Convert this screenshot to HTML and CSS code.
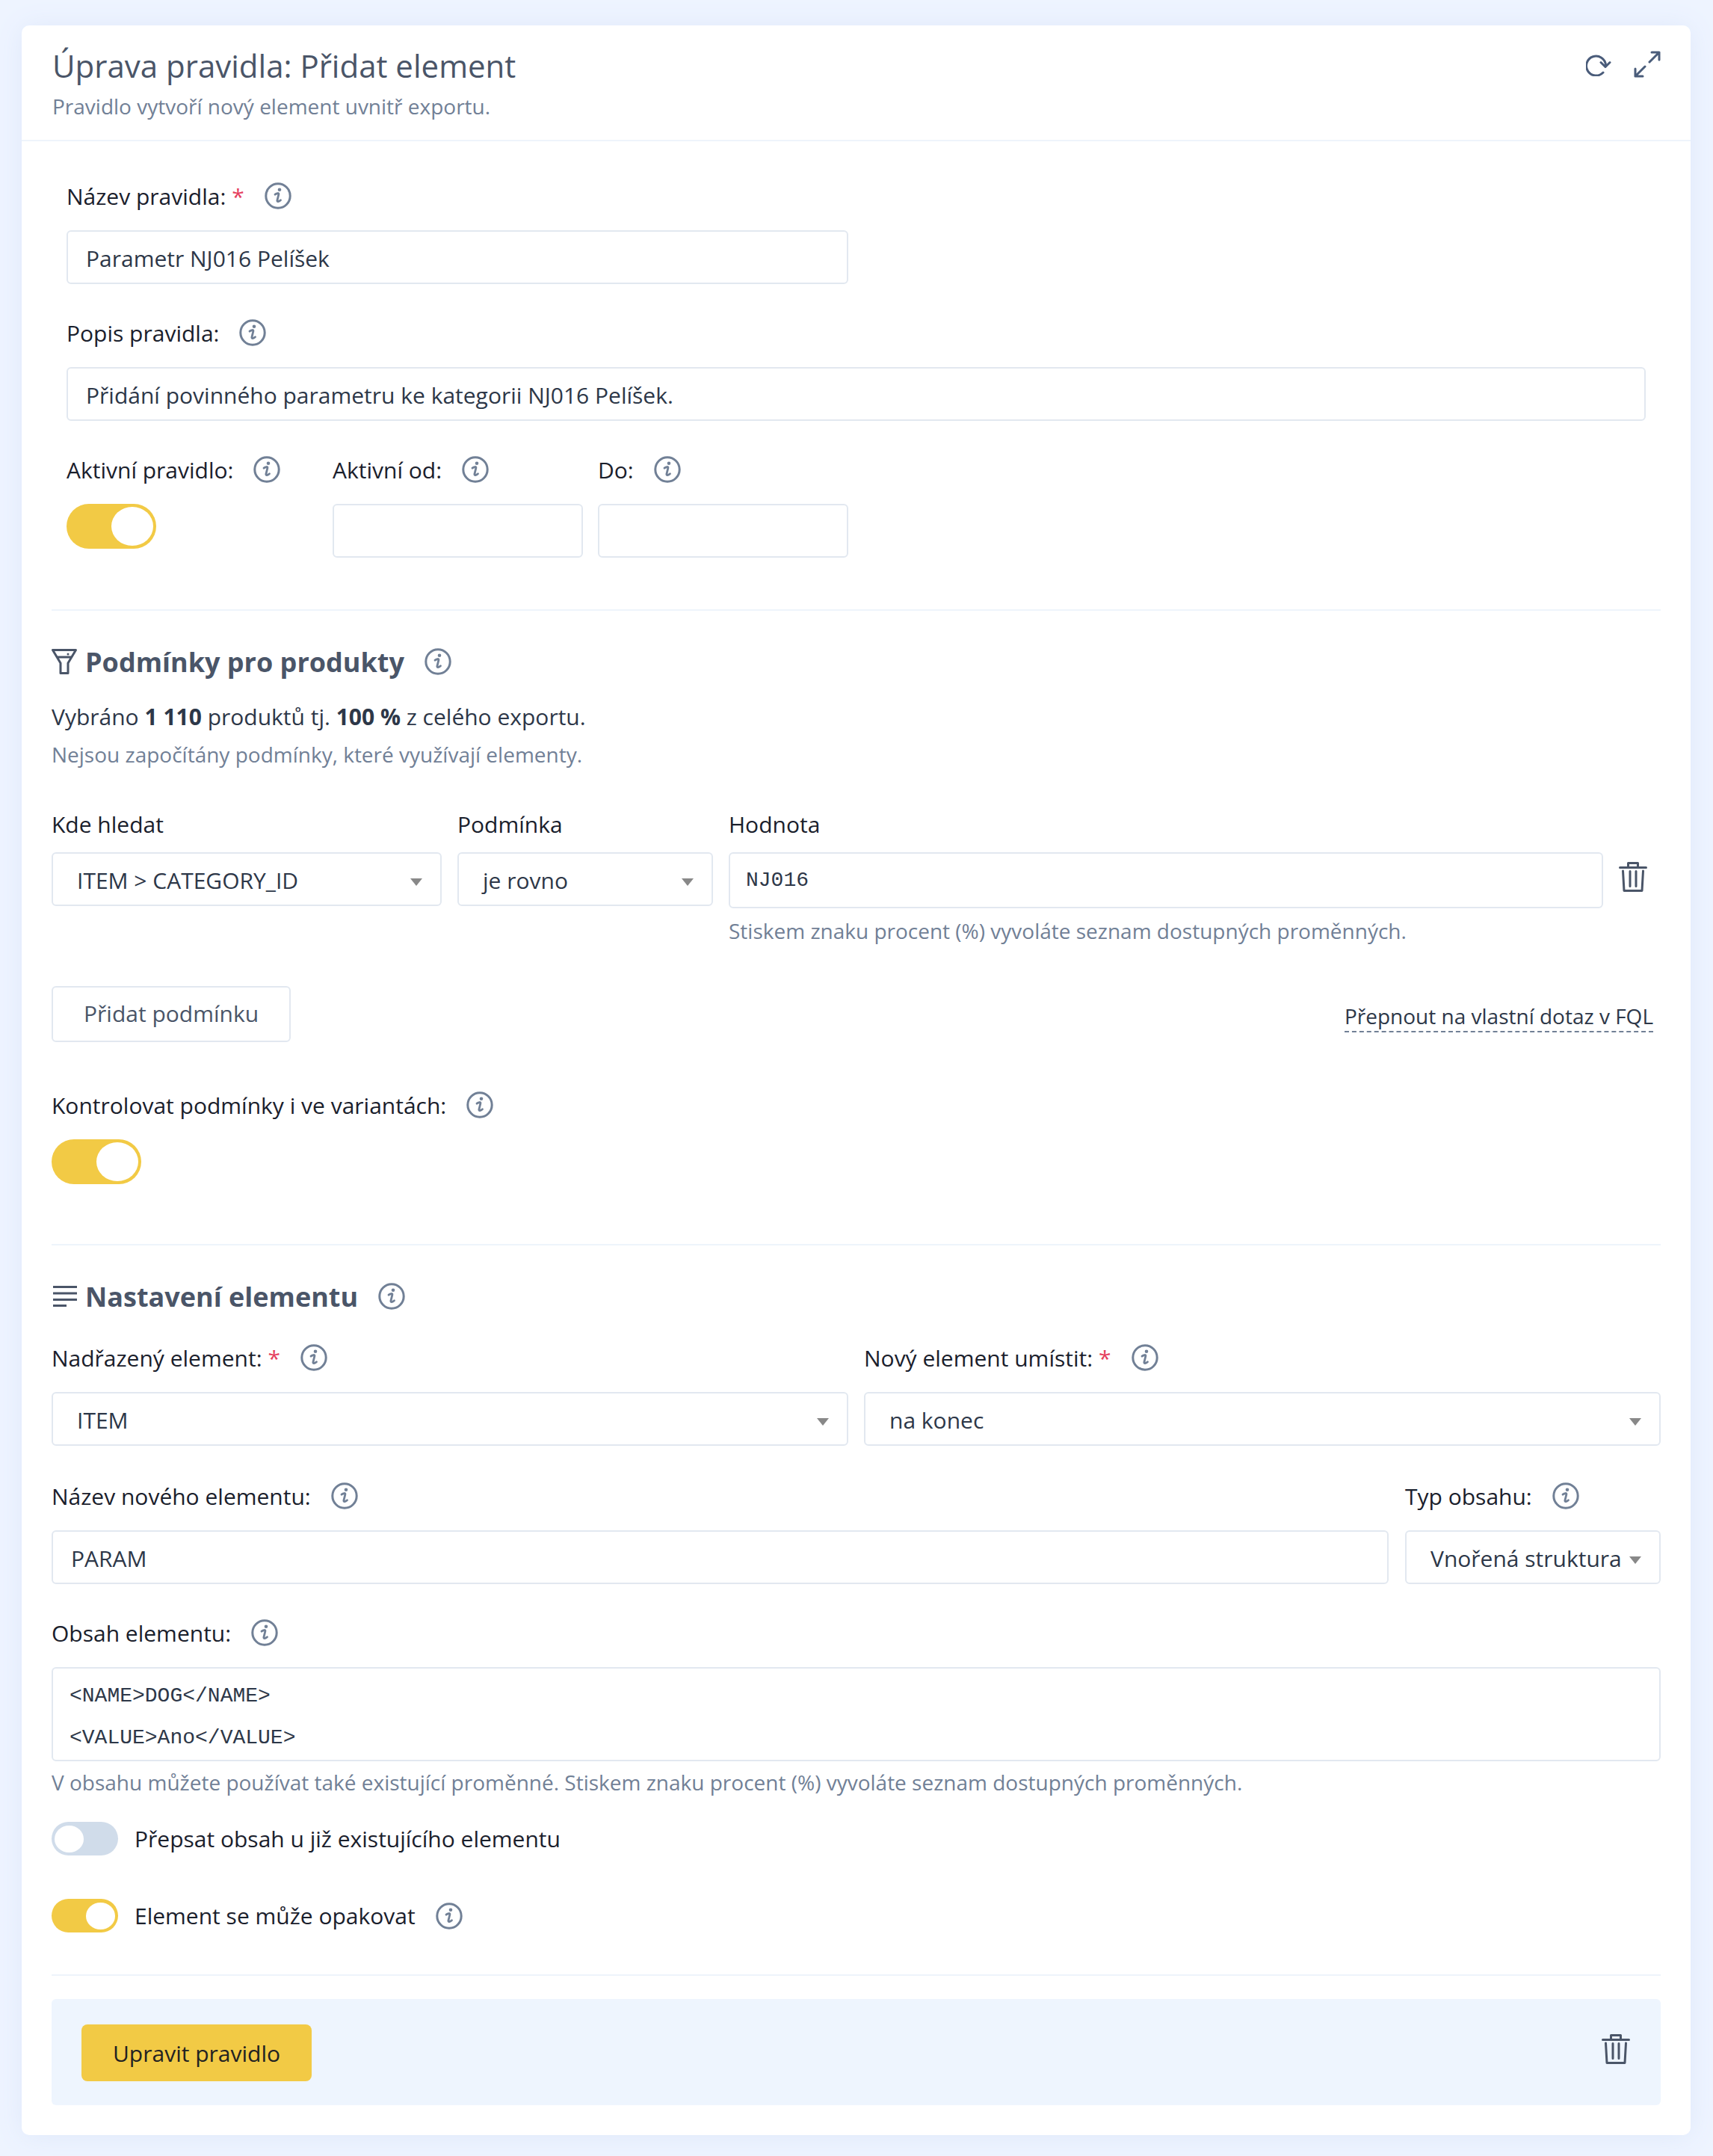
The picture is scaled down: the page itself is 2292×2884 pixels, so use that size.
FILE: index.html
```html
<!DOCTYPE html>
<html>
<head>
	<title>Úprava pravidla</title>
	<meta charset="utf-8">
	<link rel="stylesheet" href="styles.css">
</head>
<body>
	<svg class="defs" width="0" height="0">
		<symbol id="info" viewBox="0 0 36 36">
			<circle cx="18" cy="18" r="16.200" fill="none" stroke="currentColor" stroke-width="3"/>
			<path d="M14 16.200c2.400-2 5.400-2.400 4.900-.2l-2 8.200c-.5 2 2.300 1.600 4.600-.5" fill="none" stroke="currentColor" stroke-width="2.800" stroke-linecap="round"/>
			<circle cx="20" cy="9.800" r="2.300" fill="currentColor"/>
		</symbol>
		<symbol id="trash" viewBox="0 0 38 40">
			<path d="M1.500 7.500h35M12.500 7V1.500h13V7M5.500 12l1.500 26.500h24l1.500-26.500M15 12.500v20M23 12.500v20" fill="none" stroke="currentColor" stroke-width="3" stroke-linecap="round" stroke-linejoin="round"/>
		</symbol>
	</svg>

	<div class="card">
		<div class="card-head">
			<div>
				<h1 class="title">Úprava pravidla: Přidat element</h1>
				<p class="subtitle">Pravidlo vytvoří nový element uvnitř exportu.</p>
			</div>
			<div class="head-icons">
				<svg class="icon-refresh" viewBox="0 0 34 30"><path d="M23 25A13 13 0 1 1 26.500 15M20 11.500l6 6 6-6" fill="none" stroke="currentColor" stroke-width="3" stroke-linecap="round" stroke-linejoin="round"/></svg>
				<svg class="icon-expand" viewBox="0 0 36 36"><path d="M21 15L34 2M24 2h10v10M15 21L2 34M2 24v10h10" fill="none" stroke="currentColor" stroke-width="3" stroke-linecap="round" stroke-linejoin="round"/></svg>
			</div>
		</div>

		<div class="card-body">
			<div class="basic">
				<div class="half field">
					<div class="label">Název pravidla:<span class="req">*</span><svg class="info"><use href="#info"/></svg></div>
					<div class="input">Parametr NJ016 Pelíšek</div>
				</div>
				<div class="field">
					<div class="label">Popis pravidla:<svg class="info"><use href="#info"/></svg></div>
					<div class="input">Přidání povinného parametru ke kategorii NJ016 Pelíšek.</div>
				</div>
				<div class="active-row">
					<div>
						<div class="label">Aktivní pravidlo:<svg class="info"><use href="#info"/></svg></div>
						<div class="toggle on"><span class="knob"></span></div>
					</div>
					<div>
						<div class="label">Aktivní od:<svg class="info"><use href="#info"/></svg></div>
						<div class="input"></div>
					</div>
					<div>
						<div class="label">Do:<svg class="info"><use href="#info"/></svg></div>
						<div class="input"></div>
					</div>
				</div>
			</div>

			<hr class="divider first">

			<h2 class="section-title">
				<svg class="icon-filter" viewBox="0 0 34 34">
					<path d="M1.500 1.500h31L22 19v13.500H12V19zM7 11h20" fill="none" stroke="currentColor" stroke-width="3" stroke-linejoin="round"/>
					<circle cx="22" cy="7" r="1.500" fill="currentColor"/>
				</svg>
				Podmínky pro produkty<svg class="info"><use href="#info"/></svg>
			</h2>
			<p class="summary">Vybráno <b>1 110</b> produktů tj. <b>100 %</b> z celého exportu.</p>
			<p class="hint">Nejsou započítány podmínky, které využívají elementy.</p>

			<div class="cond-row">
				<div>
					<div class="label small-gap">Kde hledat</div>
					<div class="select">ITEM &gt; CATEGORY_ID</div>
				</div>
				<div>
					<div class="label small-gap">Podmínka</div>
					<div class="select">je rovno</div>
				</div>
				<div>
					<div class="label small-gap">Hodnota</div>
					<div class="input mono tall">NJ016</div>
					<p class="hint">Stiskem znaku procent (%) vyvoláte seznam dostupných proměnných.</p>
				</div>
				<svg class="trash row-trash"><use href="#trash"/></svg>
			</div>

			<div class="add-row">
				<div class="btn-outline">Přidat podmínku</div>
				<a class="fql-link">Přepnout na vlastní dotaz v FQL</a>
			</div>

			<div class="label">Kontrolovat podmínky i ve variantách:<svg class="info"><use href="#info"/></svg></div>
			<div class="toggle on"><span class="knob"></span></div>

			<hr class="divider second">

			<h2 class="section-title">
				<svg class="icon-lines" viewBox="0 0 32 28"><path d="M0 1.500h32M0 10h32M0 18.500h32M0 26.500h18" fill="none" stroke="currentColor" stroke-width="3"/></svg>
				Nastavení elementu<svg class="info"><use href="#info"/></svg>
			</h2>

			<div class="two-col elem-top">
				<div>
					<div class="label">Nadřazený element:<span class="req">*</span><svg class="info"><use href="#info"/></svg></div>
					<div class="select">ITEM</div>
				</div>
				<div>
					<div class="label">Nový element umístit:<span class="req">*</span><svg class="info"><use href="#info"/></svg></div>
					<div class="select">na konec</div>
				</div>
			</div>

			<div class="name-row field">
				<div>
					<div class="label">Název nového elementu:<svg class="info"><use href="#info"/></svg></div>
					<div class="input">PARAM</div>
				</div>
				<div>
					<div class="label">Typ obsahu:<svg class="info"><use href="#info"/></svg></div>
					<div class="select">Vnořená struktura</div>
				</div>
			</div>

			<div class="label">Obsah elementu:<svg class="info"><use href="#info"/></svg></div>
			<div class="code">&lt;NAME&gt;DOG&lt;/NAME&gt;<br>&lt;VALUE&gt;Ano&lt;/VALUE&gt;</div>
			<p class="hint code-hint">V obsahu můžete používat také existující proměnné. Stiskem znaku procent (%) vyvoláte seznam dostupných proměnných.</p>

			<div class="switch-line">
				<div class="toggle small"><span class="knob"></span></div>
				Přepsat obsah u již existujícího elementu
			</div>
			<div class="switch-line">
				<div class="toggle small on"><span class="knob"></span></div>
				Element se může opakovat<svg class="info"><use href="#info"/></svg>
			</div>

			<hr class="divider third">

			<div class="footer-panel">
				<div class="btn-primary">Upravit pravidlo</div>
				<svg class="trash panel-trash"><use href="#trash"/></svg>
			</div>
		</div>
	</div>
</body>
</html>
```

FILE: styles.css
```css
* {
	box-sizing: border-box;
}
body {
	margin: 0;
	padding: 34px 30px 27px 29px;
	background-color: #eef4ff;
	font-family: "Open Sans", sans-serif;
	font-size: 30px;
	color: #1a202c;
}
.defs {
	position: absolute;
}
.card {
	background-color: white;
	border-radius: 10px;
	box-shadow: 0 2px 36px #dfe8fa;
}
.card-head {
	display: flex;
	justify-content: space-between;
	height: 155px;
	padding: 34px 40px 0 41px;
	border-bottom: 2px solid #eef4fb;
}
.title {
	margin: 0;
	font-size: 42px;
	line-height: 40px;
	font-weight: 400;
	color: #4a5568;
}
.subtitle {
	margin: 14px 0 0 0;
	font-size: 28px;
	line-height: 40px;
	color: #718096;
}
.head-icons {
	display: flex;
	gap: 30px;
	color: #4a5c7a;
}
.icon-refresh {
	width: 34px;
	height: 30px;
	margin-top: 4px;
}
.icon-expand {
	width: 36px;
	height: 36px;
}
.card-body {
	padding: 51px 40px 40px 40px;
}
.basic {
	padding: 0 20px;
}
.half {
	width: 1046px;
}
.field {
	margin-bottom: 43px;
}
.label {
	display: flex;
	align-items: center;
	height: 44px;
	margin-bottom: 24px;
	white-space: nowrap;
}
.label.small-gap {
	margin-bottom: 16px;
}
.req {
	margin-left: 8px;
	color: #e53e5e;
}
.info {
	flex: none;
	width: 36px;
	height: 36px;
	margin-left: 27px;
	color: #718096;
}
.input, .select {
	height: 72px;
	line-height: 71px;
	padding: 0 24px;
	border: 2px solid #e2e8f0;
	border-radius: 6px;
	color: #2d3748;
	white-space: nowrap;
}
.select {
	position: relative;
	padding-left: 32px;
}
.select::after {
	content: "";
	position: absolute;
	right: 24px;
	top: 33px;
	border-left: 8px solid transparent;
	border-right: 8px solid transparent;
	border-top: 10px solid #888;
}
.mono {
	font-family: "Liberation Mono", monospace;
	font-size: 28px;
	padding-left: 21px;
}
.tall {
	height: 75px;
	line-height: 71px;
}
.active-row {
	display: grid;
	grid-template-columns: 336px 335px 335px;
	gap: 20px;
}
.toggle {
	display: flex;
	align-items: center;
	width: 120px;
	height: 60px;
	padding: 0 4px;
	border-radius: 30px;
	background-color: #d0dcea;
}
.toggle.on {
	justify-content: flex-end;
	background-color: #f2ca45;
}
.knob {
	width: 56px;
	height: 52px;
	border-radius: 50%;
	background-color: white;
}
.toggle.small {
	flex: none;
	width: 89px;
	height: 45px;
	margin-right: 22px;
}
.toggle.small .knob {
	width: 39px;
	height: 36px;
}
.divider {
	height: 2px;
	margin: 0;
	border: none;
	background-color: #eef4fb;
}
.divider.first {
	margin-top: 69px;
	margin-bottom: 43px;
}
.divider.second {
	margin-top: 80px;
	margin-bottom: 43px;
}
.divider.third {
	margin-top: 56px;
	margin-bottom: 31px;
}
.section-title {
	display: flex;
	align-items: center;
	height: 50px;
	margin: 0;
	font-size: 36px;
	font-weight: 700;
	color: #4a5568;
}
.icon-filter {
	width: 34px;
	height: 34px;
	margin-right: 11px;
}
.icon-lines {
	width: 32px;
	height: 28px;
	margin: 0 11px 0 2px;
}
.summary {
	margin: 27px 0 6px 0;
	line-height: 44px;
	color: #2d3748;
}
.hint {
	margin: 0;
	line-height: 44px;
	font-size: 28px;
	color: #718096;
}
.cond-row {
	display: grid;
	grid-template-columns: 522px 342px 1170px 38px;
	gap: 21px;
	margin-top: 49px;
}
.cond-row .select {
	margin-top: 1px;
}
.cond-row .hint {
	margin-top: 8px;
}
.row-trash {
	margin-top: 73px;
}
.trash {
	width: 38px;
	height: 40px;
	color: #4a5568;
}
.panel-trash {
	margin-bottom: 8px;
}
.add-row {
	display: flex;
	justify-content: space-between;
	align-items: flex-start;
	margin-top: 52px;
	margin-bottom: 62px;
}
.btn-outline {
	height: 75px;
	line-height: 69px;
	padding: 0 41px;
	border: 2px solid #e2e8f0;
	border-radius: 6px;
	color: #4a5568;
}
.fql-link {
	margin: 21px 10px 0 0;
	padding-bottom: 1px;
	line-height: 38px;
	font-size: 28px;
	color: #2d3748;
	border-bottom: 2px dashed #718096;
}
.elem-top {
	margin-top: 35px;
	margin-bottom: 45px;
}
.two-col {
	display: grid;
	grid-template-columns: 1fr 1fr;
	gap: 21px;
}
.name-row {
	display: grid;
	grid-template-columns: 1789px 342px;
	gap: 22px;
}
.code {
	height: 126px;
	padding: 9px 22px;
	border: 2px solid #e2e8f0;
	border-radius: 6px;
	font-family: "Liberation Mono", monospace;
	font-size: 28px;
	line-height: 56px;
	color: #2d3748;
}
.code-hint {
	margin-top: 6px;
}
.switch-line {
	display: flex;
	align-items: center;
	height: 45px;
	margin-top: 58px;
}
.code-hint + .switch-line {
	margin-top: 31px;
}
.footer-panel {
	display: flex;
	justify-content: space-between;
	align-items: center;
	height: 142px;
	padding: 0 41px 0 40px;
	border-radius: 6px;
	background-color: #eef5fe;
}
.btn-primary {
	height: 76px;
	margin-top: 2px;
	line-height: 78px;
	padding: 0 42px;
	border-radius: 8px;
	background-color: #f2ca45;
	color: #222;
}
```
